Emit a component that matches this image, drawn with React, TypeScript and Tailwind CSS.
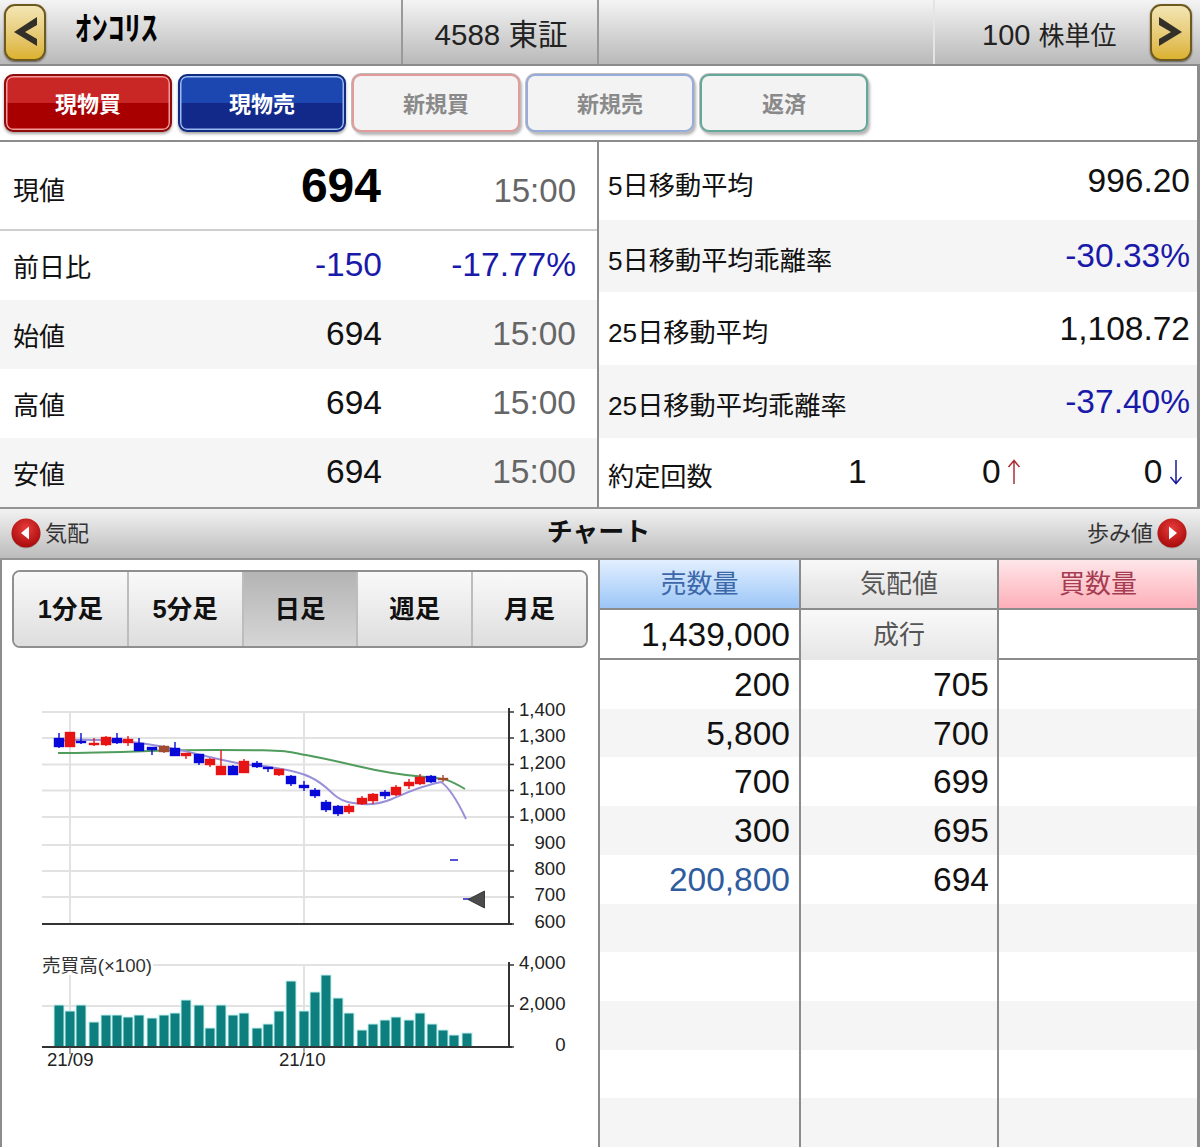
import type { ReactNode } from 'react'

// x, open top, bottom, wick top, wick bottom, colour (page coordinates)
const candles: [number, number, number, number, number, string][] = [
  [59, 738, 747, 733, 748, 'b'], [70, 732, 747, 732, 747, 'r'], [81, 741, 743, 733, 744, 'b'],
  [94, 743, 745, 738, 746, 'r'], [106, 737, 745, 736, 746, 'r'], [117, 738, 743, 733, 744, 'b'],
  [128, 739, 743, 736, 746, 'r'], [139, 743, 751, 738, 751, 'b'], [152, 747, 750, 747, 755, 'b'],
  [164, 746, 752, 745, 753, 'm'], [175, 748, 756, 742, 756, 'b'], [186, 753, 756, 753, 759, 'r'],
  [199, 754, 763, 754, 765, 'b'], [210, 759, 765, 758, 767, 'r'], [221, 766, 775, 750, 775, 'r'],
  [233, 766, 775, 765, 775, 'b'], [244, 761, 773, 759, 773, 'r'], [257, 763, 767, 761, 768, 'b'],
  [268, 767, 769, 767, 772, 'b'], [279, 769, 775, 769, 776, 'r'], [291, 776, 784, 775, 786, 'b'],
  [304, 785, 788, 781, 791, 'b'], [315, 790, 796, 788, 798, 'b'], [326, 802, 810, 800, 812, 'b'],
  [338, 806, 814, 805, 816, 'b'], [349, 806, 812, 804, 814, 'r'], [362, 798, 804, 796, 805, 'r'],
  [373, 794, 801, 793, 804, 'r'], [385, 792, 796, 790, 799, 'b'], [396, 787, 795, 785, 796, 'r'],
  [409, 782, 786, 779, 789, 'r'], [420, 777, 784, 774, 785, 'r'], [431, 776, 782, 775, 783, 'b'],
  [443, 778, 780, 775, 782, 'm'],
]

const candleColor: Record<string, string> = { b: '#0808d8', r: '#e81414', m: '#a04a30' }

const volume: [number, number][] = [
  [59, 1005], [70, 1011], [81, 1005], [94, 1022], [106, 1015], [117, 1015], [128, 1017], [139, 1015],
  [152, 1018], [164, 1015], [175, 1013], [186, 1000], [199, 1005], [210, 1028], [221, 1005], [233, 1015],
  [244, 1013], [257, 1028], [268, 1024], [279, 1011], [291, 981], [304, 1011], [315, 992], [326, 975],
  [338, 998], [349, 1013], [362, 1030], [373, 1024], [385, 1020], [396, 1017], [409, 1020], [420, 1013],
  [432, 1024], [443, 1030], [454, 1035], [467, 1033],
]

const greenLine =
  'M58 753 C 90 753 120 752 150 751 S 240 750 263 750.3 S 290 752 306 755 S 340 762 357 766 S 400 775 423 776.7 S 450 780 465 789'
const purpleLine =
  'M58 741 C 80 739 90 740 97 740 S 125 741 140 743 S 170 748 180 750 S 215 759 237 763 S 262 765 270 767 S 295 770 310 777 S 330 792 337 797 S 350 803 362 804 S 385 802 392 799 S 420 786 441 782 C 450 788 458 802 466 819'

const priceTicks: [string, number][] = [
  ['1,400', 712], ['1,300', 738], ['1,200', 764.5], ['1,100', 790.5], ['1,000', 817],
  ['900', 845], ['800', 871], ['700', 897], ['600', 924],
]

const infoLeft = [
  { label: '前日比', value: '-150', time: '-17.77%', h: 'h-[69px]', bg: 'bg-white', blue: true },
  { label: '始値', value: '694', time: '15:00', h: 'h-[69px]', bg: 'bg-[#f5f5f5]' },
  { label: '高値', value: '694', time: '15:00', h: 'h-[69px]', bg: 'bg-white' },
  { label: '安値', value: '694', time: '15:00', h: 'h-[69px]', bg: 'bg-[#f5f5f5]' },
]

const infoRight = [
  { label: '5日移動平均', value: '996.20', h: 'h-[78px]', bg: 'bg-white' },
  { label: '5日移動平均乖離率', value: '-30.33%', h: 'h-[72px]', bg: 'bg-[#f5f5f5]', blue: true },
  { label: '25日移動平均', value: '1,108.72', h: 'h-[73px]', bg: 'bg-white' },
  { label: '25日移動平均乖離率', value: '-37.40%', h: 'h-[73px]', bg: 'bg-[#f5f5f5]', blue: true },
]

const tabs = [
  { label: '1分足' }, { label: '5分足' }, { label: '日足', on: true }, { label: '週足' }, { label: '月足' },
]

const book: { sell: string; price: string; blue?: boolean }[] = [
  { sell: '200', price: '705' },
  { sell: '5,800', price: '700' },
  { sell: '700', price: '699' },
  { sell: '300', price: '695' },
  { sell: '200,800', price: '694', blue: true },
  { sell: '', price: '' }, { sell: '', price: '' }, { sell: '', price: '' }, { sell: '', price: '' }, { sell: '', price: '' },
]

function ArrowButton({ right }: { right?: boolean }) {
  return (
    <div className="flex h-[57px] w-[42px] shrink-0 items-center justify-center rounded-[11px] border-2 border-[#6e5a1e] bg-gradient-to-b from-[#f3e6b4] to-[#dcb22c] shadow-[0_1px_2px_rgba(0,0,0,0.5)]">
      <svg width="26" height="30" viewBox="0 0 26 30">
        {right ? (
          <polygon points="1,0 24,15 1,29 1,22 13,15 1,8" fill="#33302a" />
        ) : (
          <polygon points="25,0 2,15 25,29 25,22 13,15 25,8" fill="#33302a" />
        )}
      </svg>
    </div>
  )
}

function Circle({ right }: { right?: boolean }) {
  return (
    <svg width="30" height="31" viewBox="0 0 30 31" className="shrink-0">
      <defs>
        <radialGradient id={right ? 'cr' : 'cl'} cx="50%" cy="35%" r="65%">
          <stop offset="0%" stopColor="#e83c3c" />
          <stop offset="100%" stopColor="#a80a0a" />
        </radialGradient>
      </defs>
      <circle cx="15" cy="16" r="14.5" fill="#888" opacity="0.5" />
      <circle cx="15" cy="15" r="14.5" fill={'url(#' + (right ? 'cr' : 'cl') + ')'} />
      {right ? <polygon points="12,8.5 20,15 12,21.5" fill="#fff" /> : <polygon points="18,8.5 10,15 18,21.5" fill="#fff" />}
    </svg>
  )
}

function TickArrow({ down }: { down?: boolean }) {
  return (
    <svg width="14" height="26" viewBox="0 0 14 26" className="shrink-0">
      {down ? (
        <path d="M7 1 V24 M1.5 18 L7 24.5 L12.5 18" fill="none" stroke="#1a1a9a" strokeWidth="1.5" />
      ) : (
        <path d="M7 25 V2 M1.5 8 L7 1.5 L12.5 8" fill="none" stroke="#a83038" strokeWidth="1.5" />
      )}
    </svg>
  )
}

function TradeButton({ children, style }: { children: ReactNode; style: string }) {
  return (
    <button className={'flex h-[58px] w-[168px] items-center justify-center rounded-[9px] pt-[2px] text-[22px] font-bold ' + style}>
      {children}
    </button>
  )
}

function Chart() {
  return (
    <svg viewBox="2 690 596 457" width="596" height="457" className="block">
      {priceTicks.map(([, y]) => (
        <line key={y} x1="42" x2="510" y1={y} y2={y} stroke="#e2e2e2" strokeWidth="2" />
      ))}
      <line x1="70" x2="70" y1="712" y2="924" stroke="#e2e2e2" strokeWidth="2" />
      <line x1="304" x2="304" y1="712" y2="924" stroke="#e2e2e2" strokeWidth="2" />
      <path d={greenLine} fill="none" stroke="#4f9c5c" strokeWidth="2" />
      <path d={purpleLine} fill="none" stroke="#9a90d8" strokeWidth="2" />
      {candles.map(([x, top, bottom, wt, wb, c]) => (
        <g key={x} fill={candleColor[c]} stroke={candleColor[c]}>
          <line x1={x} x2={x} y1={wt} y2={wb} strokeWidth="1.4" />
          <rect x={x - 5} y={top} width="10" height={bottom - top} strokeWidth="0.4" />
        </g>
      ))}
      <line x1="450" x2="458" y1="860" y2="860" stroke="#2a2ac8" strokeWidth="1.6" />
      <line x1="463" x2="472" y1="899" y2="899" stroke="#2a2ac8" strokeWidth="1.6" />
      <polygon points="468,899.5 484.5,891 484.5,908" fill="#4c4c4c" stroke="#222" strokeWidth="0.8" />
      <line x1="42" x2="512" y1="924" y2="924" stroke="#333" strokeWidth="2" />
      <line x1="509" x2="509" y1="708" y2="924" stroke="#333" strokeWidth="2" />
      {priceTicks.map(([label, y]) => (
        <g key={label}>
          <line x1="509" x2="514" y1={y} y2={y} stroke="#333" strokeWidth="1.5" />
          <text x="565.5" y={y + 4} textAnchor="end" fontSize="18.6" fill="#222">
            {label}
          </text>
        </g>
      ))}

      <line x1="42" x2="510" y1="965" y2="965" stroke="#e2e2e2" strokeWidth="2" />
      <line x1="42" x2="510" y1="1006" y2="1006" stroke="#e2e2e2" strokeWidth="2" />
      <line x1="70" x2="70" y1="965" y2="1047" stroke="#e2e2e2" strokeWidth="2" />
      <line x1="304" x2="304" y1="965" y2="1047" stroke="#e2e2e2" strokeWidth="2" />
      {volume.map(([x, top]) => (
        <rect key={x} x={x - 5} y={top} width="10" height={1047 - top} fill="#0e7f7f" stroke="#c4f0ee" strokeWidth="1" />
      ))}
      <rect x="42" y="955" width="111" height="20" fill="#fff" />
      <text x="42" y="972" fontSize="18.6" fill="#333">
        売買高(×100)
      </text>
      <line x1="42" x2="512" y1="1047" y2="1047" stroke="#333" strokeWidth="2" />
      <line x1="509" x2="509" y1="962" y2="1047" stroke="#333" strokeWidth="2" />
      <line x1="70" x2="70" y1="1047" y2="1054" stroke="#555" strokeWidth="1" />
      <line x1="304" x2="304" y1="1047" y2="1054" stroke="#555" strokeWidth="1" />
      {([['4,000', 965], ['2,000', 1006], ['0', 1047]] as [string, number][]).map(([label, y]) => (
        <g key={label}>
          <line x1="509" x2="514" y1={y} y2={y} stroke="#333" strokeWidth="1.5" />
          <text x="565.5" y={y + 4} textAnchor="end" fontSize="18.6" fill="#222">
            {label}
          </text>
        </g>
      ))}
      <text x="47" y="1066" fontSize="18.6" fill="#222">
        21/09
      </text>
      <text x="279" y="1066" fontSize="18.6" fill="#222">
        21/10
      </text>
    </svg>
  )
}

export default function App() {
  return (
    <div className="flex h-[1147px] w-[1200px] flex-col overflow-hidden bg-white font-['Liberation_Sans','Noto_Sans_CJK_JP',sans-serif] text-[#111]">
      {/* header */}
      <div className="flex h-[66px] shrink-0 border-b-2 border-[#8c8c8c] bg-gradient-to-b from-[#f4f4f4] to-[#b9b9b9]">
        <div className="flex w-[401px] items-center pl-[4px]">
          <ArrowButton />
          <span className="ml-[29px] -mt-[7px] text-[33px] leading-none font-bold text-black">ｵﾝｺﾘｽ</span>
        </div>
        <div className="flex w-[196px] items-center justify-center border-l-2 border-[#9a9a9a] pt-[6px] pl-[2px] text-[29.5px] text-[#222]">
          4588 東証
        </div>
        <div className="w-[336px] border-l-2 border-[#9a9a9a]" />
        <div className="flex flex-1 items-center border-l-2 border-[#e4e4e4] pr-[8px]">
          <span className="ml-[47px] pt-[7px] text-[29px] whitespace-nowrap text-[#222]">
            100 <span className="text-[26px]">株単位</span>
          </span>
          <div className="ml-auto">
            <ArrowButton right />
          </div>
        </div>
      </div>

      {/* order buttons */}
      <div className="flex h-[76px] shrink-0 items-center gap-[6px] border-r-[3px] border-b-2 border-[#8c8c8c] pl-[4px]">
        <TradeButton style="border-2 border-[#8e0c0c] bg-[linear-gradient(#c92626_50%,#a80000_50%)] text-white shadow-[inset_0_0_0_1.5px_#f59a9a,0_2px_3px_rgba(0,0,0,0.35)]">
          現物買
        </TradeButton>
        <TradeButton style="border-2 border-[#102c80] bg-[linear-gradient(#1c46b0_50%,#12298a_50%)] text-white shadow-[inset_0_0_0_1.5px_#9cbaf2,0_2px_3px_rgba(0,0,0,0.35)]">
          現物売
        </TradeButton>
        <TradeButton style="border-2 border-[#e39a9a] bg-[#f3f3f3] text-[#8a8a8a] shadow-[0_0_0_1px_#bbb,2px_3px_3px_rgba(0,0,0,0.3)]">新規買</TradeButton>
        <TradeButton style="border-2 border-[#98acdc] bg-[#f3f3f3] text-[#8a8a8a] shadow-[0_0_0_1px_#bbb,2px_3px_3px_rgba(0,0,0,0.3)]">新規売</TradeButton>
        <TradeButton style="border-2 border-[#62a999] bg-[#f3f3f3] text-[#8a8a8a] shadow-[0_0_0_1px_#bbb,2px_3px_3px_rgba(0,0,0,0.3)]">返済</TradeButton>
      </div>

      {/* quote table */}
      <div className="flex h-[365px] shrink-0 border-r-[3px] border-[#8c8c8c]">
        <div className="w-[597px] shrink-0">
          <div className="flex h-[89px] items-center border-b-2 border-[#cfcfcf] pl-[13px]">
            <span className="w-[237px] pt-[12px] text-[26px]">現値</span>
            <span className="w-[131px] pt-[1px] text-right text-[48px] leading-none font-bold text-black">694</span>
            <span className="w-[195px] pt-[10px] text-right text-[33px] text-[#666]">15:00</span>
          </div>
          {infoLeft.map((r) => (
            <div key={r.label} className={'flex items-center pl-[13px] ' + r.h + ' ' + r.bg}>
              <span className="w-[238px] pt-[6px] text-[26px]">{r.label}</span>
              <span className={'w-[131px] text-right text-[33.5px] ' + (r.blue ? 'text-[#1a1aaa]' : 'text-[#111]')}>{r.value}</span>
              <span className={'w-[194px] text-right text-[33.5px] ' + (r.blue ? 'text-[#1a1aaa]' : 'text-[#666]')}>{r.time}</span>
            </div>
          ))}
        </div>
        <div className="flex-1 border-l-2 border-[#8c8c8c]">
          {infoRight.map((r) => (
            <div key={r.label} className={'flex items-center justify-between pr-[7px] pl-[9px] ' + r.h + ' ' + r.bg}>
              <span className="pt-[11px] text-[26.2px]">{r.label}</span>
              <span className={'mt-[1px] text-[33.5px] ' + (r.blue ? 'text-[#1a1aaa]' : 'text-[#111]')}>{r.value}</span>
            </div>
          ))}
          <div className="flex h-[69px] items-center pl-[9px]">
            <span className="w-[240px] pt-[11px] text-[26.2px]">約定回数</span>
            <span className="w-[14px] -mt-[1px] text-[33.5px]">1</span>
            <span className="ml-[120px] -mt-[1px] text-[33.5px]">0</span>
            <span className="ml-[6px] -mt-[1px]">
              <TickArrow />
            </span>
            <span className="ml-[123px] -mt-[1px] text-[33.5px]">0</span>
            <span className="ml-[7px] -mt-[1px]">
              <TickArrow down />
            </span>
          </div>
        </div>
      </div>

      {/* chart title bar */}
      <div className="flex h-[53px] shrink-0 items-center border-y-2 border-[#949494] bg-gradient-to-b from-[#f2f2f2] to-[#bcbcbc] pr-[13px] pl-[11px]">
        <div className="flex w-[300px] items-center gap-[4px] text-[22px] text-[#333]">
          <Circle />
          <span className="-mt-[1px]">気配</span>
        </div>
        <div className="flex-1 -mt-[3px] -ml-px text-center text-[26px] font-bold text-[#111]">チャート</div>
        <div className="flex w-[300px] items-center justify-end gap-[4px] text-[22px] text-[#333]">
          <span className="-mt-[1px]">歩み値</span>
          <Circle right />
        </div>
      </div>

      <div className="flex min-h-0 flex-1 border-r-[3px] border-l-2 border-[#8c8c8c]">
        {/* chart side */}
        <div className="w-[596px] shrink-0">
          <div className="mt-[10px] ml-[10px] flex h-[78px] w-[576px] overflow-hidden rounded-[8px] border-2 border-[#8f8f8f]">
            {tabs.map((t, i) => (
              <div
                key={t.label}
                className={
                  'flex flex-1 items-center justify-center text-[25.5px] font-bold text-[#111] ' +
                  (i > 0 ? 'border-l-2 border-[#bdbdbd] ' : '') +
                  (t.on ? 'bg-gradient-to-b from-[#b4b4b4] to-[#d6d6d6]' : 'bg-gradient-to-b from-[#f9f9f9] to-[#dedede]')
                }
              >
                {t.label}
              </div>
            ))}
          </div>
          <div className="mt-[42px]">
            <Chart />
          </div>
        </div>

        {/* order book */}
        <div className="flex min-w-0 flex-1 flex-col border-l-2 border-[#8c8c8c]">
          <div className="grid h-[50px] shrink-0 grid-cols-[199px_198px_1fr] border-b-2 border-[#8c8c8c] text-[26px]">
            <div className="flex items-center justify-center bg-gradient-to-b from-[#e2efff] to-[#9cc6f7] text-[#3c68aa]">売数量</div>
            <div className="flex items-center justify-center border-l-2 border-[#8c8c8c] bg-gradient-to-b from-[#f8f8f8] to-[#dedede] text-[#555]">気配値</div>
            <div className="flex items-center justify-center border-l-2 border-[#8c8c8c] bg-gradient-to-b from-[#fde6e9] to-[#fdafb9] text-[#a63c52]">買数量</div>
          </div>
          <div className="grid h-[50px] shrink-0 grid-cols-[199px_198px_1fr] border-b-2 border-[#8c8c8c]">
            <div className="flex items-center justify-end pr-[9px] pb-[5px] text-[33.5px]">1,439,000</div>
            <div className="flex items-center justify-center border-l-2 border-[#8c8c8c] bg-gradient-to-b from-[#f9f9f9] to-[#e4e4e4] pb-[5px] text-[26px] text-[#555]">成行</div>
            <div className="border-l-2 border-[#8c8c8c]" />
          </div>
          <div className="grid min-h-0 flex-1 grid-rows-10">
            {book.map((r, i) => (
              <div key={i} className={'grid grid-cols-[199px_198px_1fr] text-[33.5px] ' + (i % 2 ? 'bg-[#f5f5f5]' : 'bg-white')}>
                <div className={'flex items-center justify-end pr-[9px] pb-[4px] ' + (r.blue ? 'text-[#2f5c9e]' : '')}>{r.sell}</div>
                <div className="flex items-center justify-end border-l-2 border-[#8c8c8c] pr-[8px] pb-[4px]">{r.price}</div>
                <div className="border-l-2 border-[#8c8c8c]" />
              </div>
            ))}
          </div>
        </div>
      </div>
    </div>
  )
}
